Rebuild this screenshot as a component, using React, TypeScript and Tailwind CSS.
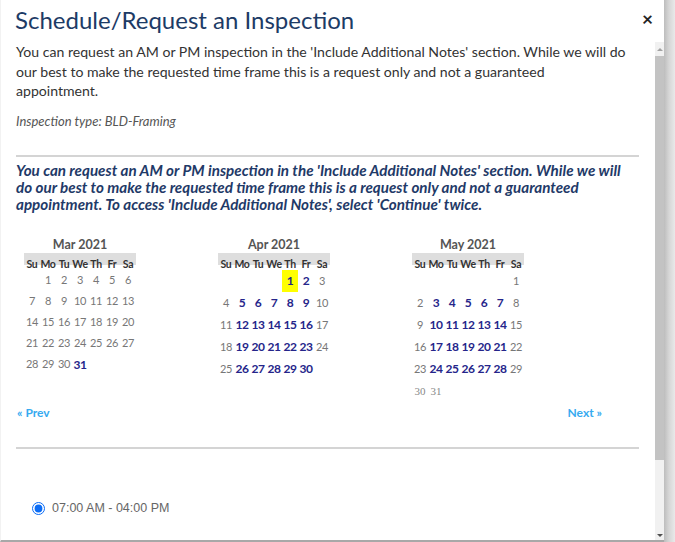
import React from 'react'

type Month = {
  title: string
  start: number // weekday of the 1st, 0 = Sunday
  days: number
  open: number[]
  picked?: number
  serifFrom?: number
  rowH: string
}

const WEEKDAYS = ['Su', 'Mo', 'Tu', 'We', 'Th', 'Fr', 'Sa']

const range = (a: number, b: number) => Array.from({ length: b - a + 1 }, (_, i) => a + i)

const MONTHS: Month[] = [
  { title: 'Mar 2021', start: 1, days: 31, open: [31], rowH: 'h-[21px]' },
  {
    title: 'Apr 2021',
    start: 4,
    days: 30,
    open: [1, 2, ...range(5, 9), ...range(12, 16), ...range(19, 23), ...range(26, 30)],
    picked: 1,
    rowH: 'h-[22px]',
  },
  {
    title: 'May 2021',
    start: 6,
    days: 31,
    open: [...range(3, 7), ...range(10, 14), ...range(17, 21), ...range(24, 28)],
    serifFrom: 30,
    rowH: 'h-[22px]',
  },
]

function MonthTable({ month }: { month: Month }) {
  const cells: (number | null)[] = [
    ...Array(month.start).fill(null),
    ...range(1, month.days),
  ]
  while (cells.length % 7) cells.push(null)
  const weeks: (number | null)[][] = []
  for (let i = 0; i < cells.length; i += 7) weeks.push(cells.slice(i, i + 7))

  return (
    <div className="w-[112px]">
      <div className="h-[17px] text-center text-[12.5px] font-bold leading-[17px] text-[#555]">
        {month.title}
      </div>
      <div className="flex h-[17px] items-end bg-[linear-gradient(#dedede_0_12px,transparent_12px)]">
        {WEEKDAYS.map((d) => (
          <div key={d} className="w-[16px] text-center text-[10.5px] font-bold leading-[12px] tracking-[-0.3px] text-[#333]">
            {d}
          </div>
        ))}
      </div>
      {weeks.map((week, wi) => (
        <div key={wi} className={`flex ${month.rowH}`}>
          {week.map((day, di) => {
            if (day === null) return <div key={di} className="w-[16px]" />
            const isOpen = month.open.includes(day)
            const isPicked = month.picked === day
            const isSerif = month.serifFrom !== undefined && day >= month.serifFrom
            return (
              <div
                key={di}
                className={`flex w-[16px] items-center justify-center ${isPicked ? 'bg-[#ffff00]' : ''}`}
              >
                {isOpen ? (
                  <span className="text-[12px] font-bold tracking-[-0.5px] text-[#25258a]">{day}</span>
                ) : (
                  <span
                    className={
                      isSerif
                        ? 'font-["Liberation_Serif",serif] text-[11px] text-[#888]'
                        : 'text-[11px] tracking-[-0.3px] text-[#777]'
                    }
                  >
                    {day}
                  </span>
                )}
              </div>
            )
          })}
        </div>
      ))}
    </div>
  )
}

export default function App() {
  return (
    <div className="flex h-[542px] w-[675px] bg-white font-['Lato',sans-serif]">
      {/* dialog */}
      <div className="flex min-w-0 flex-1 flex-col border-b-2 border-l border-b-[#a8a8a8] border-l-[#f2f2f2] shadow-[0_1px_2px_rgba(0,0,0,0.25)]">
        <div className="flex h-[42px] items-start justify-between pl-[14px] pr-[11px] pt-[5px]">
          <h1 className="text-[24px] font-normal leading-[30px] text-[#1d3b66]">
            Schedule/Request an Inspection
          </h1>
          <button className="mt-[2px] text-[19px] font-bold leading-[24px] text-[#222]">×</button>
        </div>

        <div className="flex min-h-0 flex-1">
          <div className="min-w-0 flex-1 pl-[15px] pr-[16px]">
            <p className="w-[613px] text-[14.1px] leading-[19.5px] text-[#333]">
              You can request an AM or PM inspection in the 'Include Additional Notes' section. While we will do
              our best to make the requested time frame this is a request only and not a guaranteed appointment.
            </p>
            <p className="mt-[11px] text-[13px] italic leading-[19.5px] text-[#555]">
              Inspection type: BLD-Framing
            </p>

            <hr className="mt-[24px] border-t-2 border-[#d4d4d4]" />

            <p className="mt-[5px] w-[614px] text-[15.2px] font-bold italic leading-[17px] text-[#1f3a68]">
              You can request an AM or PM inspection in the 'Include Additional Notes' section. While we will
              do our best to make the requested time frame this is a request only and not a guaranteed
              appointment. To access 'Include Additional Notes', select 'Continue' twice.
            </p>

            <div className="mt-[23px] flex gap-[82px] pl-[8px]">
              {MONTHS.map((m) => (
                <MonthTable key={m.title} month={m} />
              ))}
            </div>

            <div className="mt-[1px] flex h-[20px] items-center justify-between pl-[1px] pr-[37px] text-[12px] font-bold text-[#36aaf0]">
              <span>« Prev</span>
              <span>Next »</span>
            </div>

            <hr className="mt-[24px] border-t-2 border-[#d4d4d4]" />

            <label className="mt-[50px] flex items-center gap-[7px] pl-[16px] font-['Liberation_Sans',sans-serif] text-[12.5px] text-[#666]">
              <input type="radio" defaultChecked className="m-0 h-[13px] w-[13px] accent-[#0b6cf5]" />
              07:00 AM - 04:00 PM
            </label>
          </div>

          {/* scrollbar */}
          <div className="flex w-[9px] flex-col bg-[#f1f1f1]">
            <div className="flex h-[14px] items-center justify-center">
              <div className="h-0 w-0 border-x-[3px] border-b-[3px] border-x-transparent border-b-[#a3a3a3]" />
            </div>
            <div className="h-[404px] bg-[#c3c3c3]" />
            <div className="flex-1" />
            <div className="flex h-[10px] items-center justify-center">
              <div className="h-0 w-0 border-x-[3px] border-t-[3px] border-x-transparent border-t-[#505050]" />
            </div>
          </div>
        </div>
      </div>

      {/* backdrop edge */}
      <div className="w-[11px] bg-[linear-gradient(90deg,#bdbdbd,#d6d6d6_45%,#e9e9e9)]" />
    </div>
  )
}
